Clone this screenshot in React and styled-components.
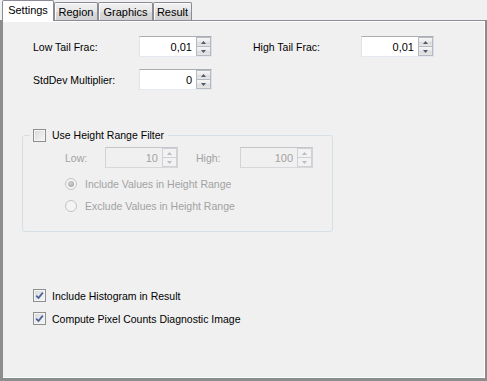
import React from "react";
import styled, { createGlobalStyle } from "styled-components";

const GlobalStyle = createGlobalStyle`
  html, body {
    margin: 0;
    padding: 0;
    background: #f0f0f0;
  }
  body {
    font-family: "Liberation Sans", Arial, sans-serif;
    font-size: 10.5px;
    color: #000;
  }
`;

const Window = styled.div`
  width: 487px;
  height: 381px;
  display: flex;
  flex-direction: column;
  overflow: hidden;
`;

const TabStrip = styled.div`
  display: flex;
  align-items: flex-end;
  height: 20px;
  padding-left: 2px;
  position: relative;
  z-index: 1;
`;

const Tab = styled.div`
  box-sizing: border-box;
  width: ${(p) => p.$w}px;
  height: ${(p) => (p.$active ? 21 : 18)}px;
  margin-bottom: ${(p) => (p.$active ? -1 : 0)}px;
  display: flex;
  align-items: center;
  justify-content: center;
  padding-bottom: ${(p) => (p.$active ? 2 : 0)}px;
  font-size: 11px;
  border: 1px solid #898c95;
  border-bottom: none;
  border-radius: 2px 2px 0 0;
  background: ${(p) =>
    p.$active ? "#ffffff" : "linear-gradient(#f3f3f3, #e6e6e6 50%, #dadada 51%, #d2d2d2)"};
  box-shadow: ${(p) => (p.$active ? "none" : "inset 1px 1px 0 #fbfbfb")};
`;

const Panel = styled.div`
  flex: 1;
  box-sizing: border-box;
  border-top: 1px solid #898c95;
  border-left: 3px solid #8d8d8d;
  border-right: 2px solid #8d8d8d;
  border-bottom: 3px solid #8d8d8d;
  box-shadow: inset 0 1px 0 #ffffff, inset -1px -1px 0 #ffffff;
  background: #f0f0f0;
  padding: 15px 0 0 19px;
  display: flex;
  flex-direction: column;
  align-items: flex-start;
`;

const FieldGrid = styled.div`
  margin-left: 11px;
  display: grid;
  grid-template-columns: 106px 73px 41px 108px 73px;
  grid-auto-rows: 21px;
  row-gap: 12px;
  align-items: center;
`;

const Label = styled.span`
  grid-column: ${(p) => p.$col || "auto"};
  color: ${(p) => (p.$disabled ? "#a2a2a2" : "#000")};
  white-space: nowrap;
`;

const SpinBox = styled.div`
  grid-column: ${(p) => p.$col || "auto"};
  box-sizing: border-box;
  width: ${(p) => p.$w || 73}px;
  height: 21px;
  display: flex;
  border: 1px solid ${(p) => (p.$disabled ? "#c4c6cb" : "#abadb3")};
  border-bottom-color: ${(p) => (p.$disabled ? "#d6d8dc" : "#e3e9ef")};
  border-left-color: ${(p) => (p.$disabled ? "#d2d3d6" : "#e2e3ea")};
  border-right-color: ${(p) => (p.$disabled ? "#d2d3d6" : "#dbdfe6")};
  background: ${(p) => (p.$disabled ? "#f0f0f0" : "#ffffff")};
`;

const SpinValue = styled.span`
  flex: 1;
  display: flex;
  align-items: center;
  justify-content: flex-end;
  padding-right: 4px;
  font-size: 11px;
  color: ${(p) => (p.$disabled ? "#a2a2a2" : "#000")};
`;

const SpinButtons = styled.div`
  width: 15px;
  display: flex;
  flex-direction: column;
`;

const SpinButton = styled.div`
  flex: 1;
  display: flex;
  align-items: center;
  justify-content: center;
  box-sizing: border-box;
  border: 1px solid ${(p) => (p.$disabled ? "#cfd1d5" : "#b5b9c1")};
  margin-top: ${(p) => (p.$down ? -1 : 0)}px;
  background: ${(p) =>
    p.$disabled ? "#f2f2f2" : "linear-gradient(#f6f6f6, #e8e8e8 50%, #dcdcdc 51%, #e6e6e6)"};
`;

const GroupBox = styled.fieldset`
  margin: 38px 0 0 0;
  width: 311px;
  box-sizing: border-box;
  border: 1px solid #d5dfe5;
  border-radius: 3px;
  padding: 5px 0 14px 7px;
`;

const Legend = styled.legend`
  padding: 0 4px 0 3px;
  display: flex;
  align-items: center;
  gap: 6px;
  height: 14px;
`;

const GroupBody = styled.div`
  margin-left: 35px;
  display: flex;
  flex-direction: column;
`;

const RangeRow = styled.div`
  display: grid;
  grid-template-columns: 40px 73px 18px 44px 73px;
  height: 21px;
  align-items: center;
`;

const RadioRow = styled.label`
  display: flex;
  align-items: center;
  gap: 8px;
  height: 22px;
  color: #a2a2a2;
  &:first-of-type {
    margin-top: 5px;
  }
`;

const Radio = styled.span`
  box-sizing: border-box;
  width: 12px;
  height: 12px;
  border-radius: 50%;
  border: 1px solid #c3c3c3;
  background: #f4f4f4;
  display: flex;
  align-items: center;
  justify-content: center;
  &::after {
    content: "";
    display: ${(p) => (p.$checked ? "block" : "none")};
    width: 6px;
    height: 6px;
    border-radius: 50%;
    background: radial-gradient(circle at 40% 35%, #d2d2d2, #9c9c9c);
  }
`;

const Options = styled.div`
  margin: 55px 0 0 11px;
  display: flex;
  flex-direction: column;
  gap: 6px;
`;

const CheckRow = styled.label`
  display: flex;
  align-items: center;
  gap: 6px;
  height: 17px;
`;

const Box = styled.span`
  box-sizing: border-box;
  width: 13px;
  height: 13px;
  flex: none;
  border: 1px solid #8e8f8f;
  background: linear-gradient(135deg, #d9d9d9, #f7f7f7);
  box-shadow: inset 0 0 0 1px #f4f4f4;
  display: flex;
  align-items: center;
  justify-content: center;
`;

function Arrow({ down, disabled }) {
  return (
    <svg width="5" height="3" viewBox="0 0 5 3">
      <path
        d={down ? "M0 0 H5 L2.5 3 Z" : "M0 3 H5 L2.5 0 Z"}
        fill={disabled ? "#b9bcc2" : "#4e5a6e"}
      />
    </svg>
  );
}

function Spin({ value, col, w, disabled }) {
  return (
    <SpinBox $col={col} $w={w} $disabled={disabled}>
      <SpinValue $disabled={disabled}>{value}</SpinValue>
      <SpinButtons>
        <SpinButton $disabled={disabled}>
          <Arrow disabled={disabled} />
        </SpinButton>
        <SpinButton $down $disabled={disabled}>
          <Arrow down disabled={disabled} />
        </SpinButton>
      </SpinButtons>
    </SpinBox>
  );
}

function CheckBox({ checked }) {
  return (
    <Box>
      {checked && (
        <svg width="9" height="9" viewBox="0 0 9 9">
          <path d="M1.2 4.6 L3.5 7 L7.8 1.6" fill="none" stroke="#4a5f9a" strokeWidth="1.7" />
        </svg>
      )}
    </Box>
  );
}

const tabs = [
  { name: "Settings", w: 52 },
  { name: "Region", w: 44 },
  { name: "Graphics", w: 55 },
  { name: "Result", w: 39 },
];

export default function App() {
  return (
    <>
      <GlobalStyle />
      <Window>
        <TabStrip>
          {tabs.map((t, i) => (
            <Tab key={t.name} $w={t.w} $active={i === 0}>
              {t.name}
            </Tab>
          ))}
        </TabStrip>
        <Panel>
          <FieldGrid>
            <Label>Low Tail Frac:</Label>
            <Spin value="0,01" />
            <Label $col="4">High Tail Frac:</Label>
            <Spin value="0,01" />
            <Label>StdDev Multiplier:</Label>
            <Spin value="0" />
          </FieldGrid>

          <GroupBox>
            <Legend>
              <CheckBox />
              <span>Use Height Range Filter</span>
            </Legend>
            <GroupBody>
              <RangeRow>
                <Label $disabled>Low:</Label>
                <Spin value="10" disabled />
                <Label $col="4" $disabled>High:</Label>
                <Spin value="100" disabled />
              </RangeRow>
              <RadioRow>
                <Radio $checked />
                Include Values in Height Range
              </RadioRow>
              <RadioRow>
                <Radio />
                Exclude Values in Height Range
              </RadioRow>
            </GroupBody>
          </GroupBox>

          <Options>
            <CheckRow>
              <CheckBox checked />
              Include Histogram in Result
            </CheckRow>
            <CheckRow>
              <CheckBox checked />
              Compute Pixel Counts Diagnostic Image
            </CheckRow>
          </Options>
        </Panel>
      </Window>
    </>
  );
}
